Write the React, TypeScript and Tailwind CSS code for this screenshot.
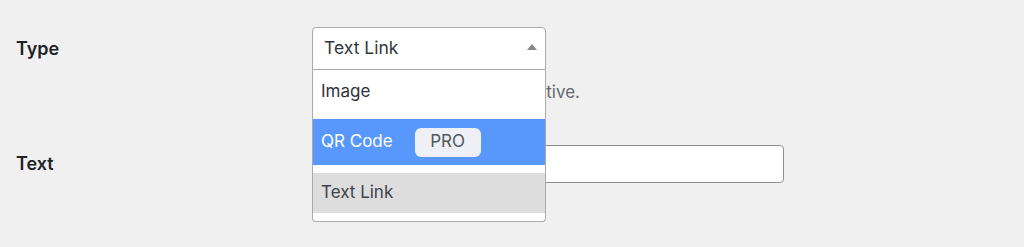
import React from "react";

export default function App() {
  return (
    <div
      className="w-full h-[247px] bg-[#f0f0f1] overflow-hidden pt-[27px]"
      style={{ fontFamily: "Inter, 'Noto Sans', sans-serif" }}
    >
      <div className="flex">
        <div className="w-[312px] shrink-0 pl-[16px] pt-[10px]">
          <span className="text-[18px] leading-[24px] font-semibold text-[#1d2327]">Type</span>
        </div>
        <div className="flex flex-col">
          <div className="relative w-[234px] z-10">
            <div className="h-[43px] bg-white border border-[#aaaaaa] rounded-t-[4px] flex items-center pl-[11px] relative">
              <span className="text-[17.5px] text-[#32373c]">Text Link</span>
              <span className="absolute right-[8px] top-[16px] w-0 h-0 border-l-[5px] border-r-[5px] border-b-[6px] border-l-transparent border-r-transparent border-b-[#888888]" />
            </div>
            <div className="absolute left-0 top-full w-full bg-white border border-t-0 border-[#aaaaaa] rounded-b-[4px] text-[17px]">
              <div className="h-[49px] flex items-center pb-[5px] pl-[8px] text-[#2c3338]">Image</div>
              <div className="h-[46px] flex items-center pl-[8px] bg-[#5897fb] text-white">
                <span>QR Code</span>
                <span className="ml-[22px] w-[66px] h-[29px] rounded-[6px] bg-[#eef0f5] text-[#50575e] flex items-center justify-center text-[17px]">
                  PRO
                </span>
              </div>
              <div className="h-[8px]" />
              <div className="h-[40px] flex items-center pl-[8px] bg-[#dddddd] text-[#3c434a]">Text Link</div>
              <div className="h-[8px]" />
            </div>
          </div>
          <div className="mt-[10px] w-[268px] overflow-hidden flex justify-end">
            <p className="text-[17px] leading-[24px] text-[#646970] whitespace-nowrap">
              Text link is the most effective.
            </p>
          </div>
        </div>
      </div>
      <div className="flex items-center mt-[41px]">
        <div className="w-[312px] shrink-0 pl-[16px]">
          <span className="text-[18px] leading-[24px] font-semibold text-[#1d2327]">Text</span>
        </div>
        <input
          type="text"
          className="w-[472px] h-[38px] bg-white border border-[#8c8f94] rounded-[4px]"
        />
      </div>
    </div>
  );
}
